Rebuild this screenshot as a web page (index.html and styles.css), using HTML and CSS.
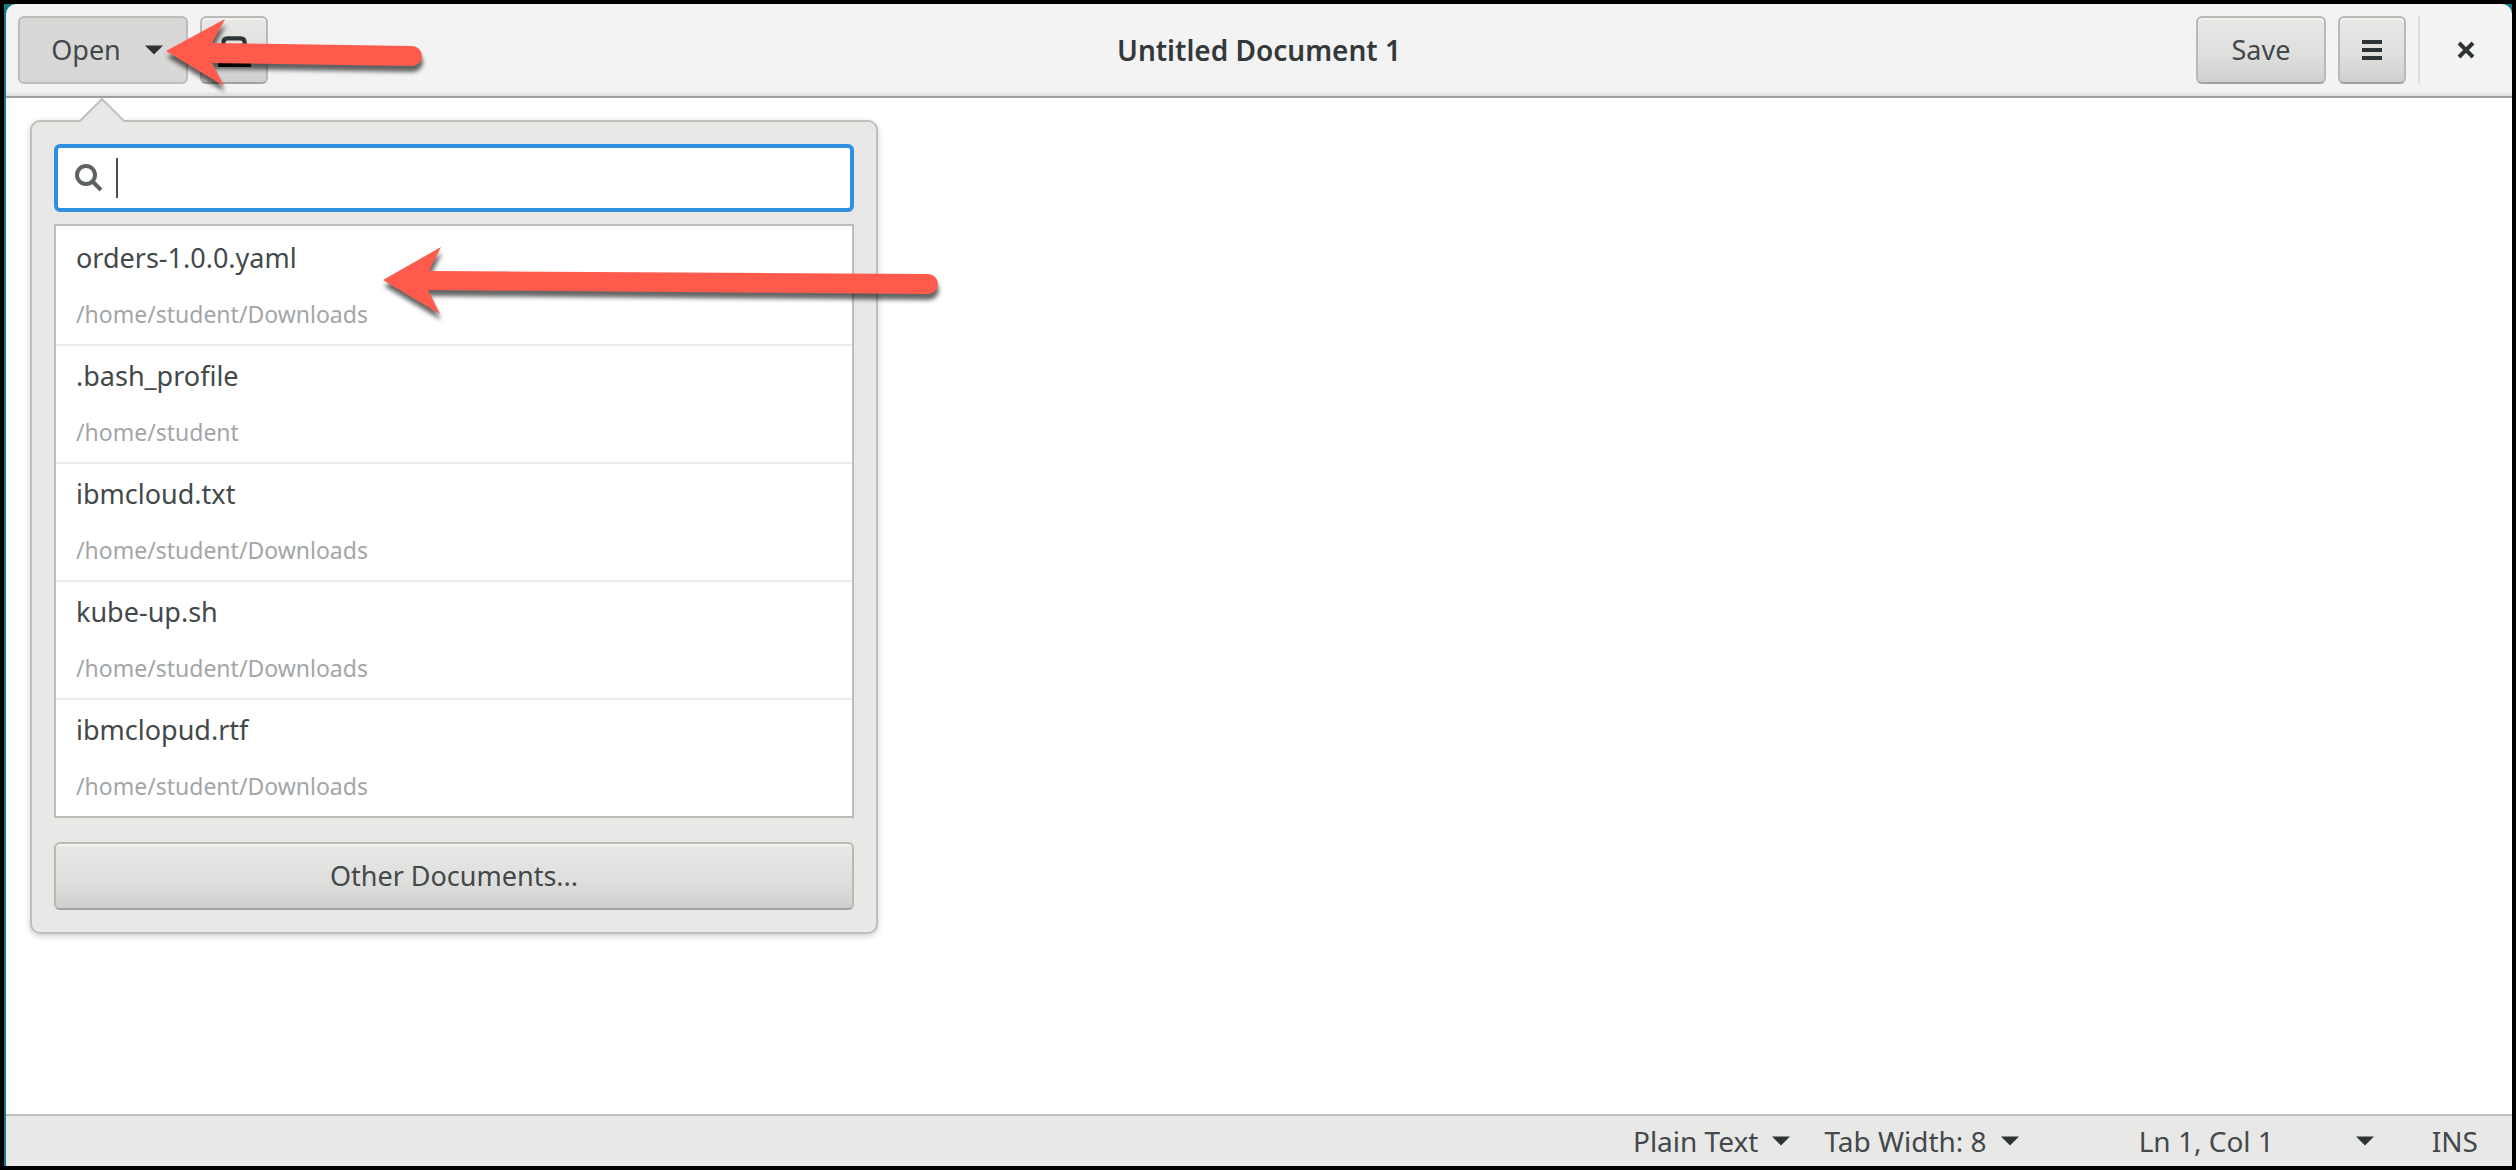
FILE: index.html
```html
<!DOCTYPE html>
<html lang="en">
<head>
  <meta charset="utf-8">
  <title>Untitled Document 1</title>
  <link rel="stylesheet" href="styles.css">
</head>
<body>
  <div class="window">
    <header class="headerbar">
      <div class="header-start">
        <div class="open-group">
          <button class="button button-open" type="button" aria-expanded="true">
            <span>Open</span>
            <svg class="caret" viewBox="0 0 20 10" aria-hidden="true"><path d="M0 0h20L10 10z"/></svg>
          </button>

          <section class="popover" aria-label="Open a document">
            <svg class="popover-tip" viewBox="0 0 44 24" aria-hidden="true"><path class="tip-fill" d="M0 24L22 1L44 24z"/><path class="tip-line" d="M0 23L22 1L44 23"/></svg>
            <label class="search">
              <svg class="search-icon" viewBox="0 0 30 30" aria-hidden="true"><circle cx="12" cy="12" r="9"/><path d="M18 18l9 9"/></svg>
              <span class="text-cursor"></span>
              <input class="search-input" type="text" aria-label="Search documents">
            </label>
            <ul class="documents">
              <li class="document"><span class="name">orders-1.0.0.yaml</span><span class="path">/home/student/Downloads</span></li>
              <li class="document"><span class="name">.bash_profile</span><span class="path">/home/student</span></li>
              <li class="document"><span class="name">ibmcloud.txt</span><span class="path">/home/student/Downloads</span></li>
              <li class="document"><span class="name">kube-up.sh</span><span class="path">/home/student/Downloads</span></li>
              <li class="document"><span class="name">ibmclopud.rtf</span><span class="path">/home/student/Downloads</span></li>
            </ul>
            <button class="button button-wide" type="button">Other Documents...</button>
          </section>
        </div>
        <button class="button button-icon" type="button" aria-label="New document">
          <svg class="icon-new" viewBox="0 0 32 32" aria-hidden="true"><path class="page" d="M6 30V9q0-4 4-4h12q4 0 4 4v21"/><path class="base" d="M1 27h32v5H1z"/></svg>
        </button>
      </div>
      <h1 class="title">Untitled Document 1</h1>
      <div class="header-end">
        <button class="button button-save" type="button">Save</button>
        <button class="button button-icon" type="button" aria-label="Menu">
          <svg class="icon-menu" viewBox="0 0 20 20" aria-hidden="true"><path d="M0 0h20v4H0zM0 8h20v4H0zM0 16h20v4H0z"/></svg>
        </button>
        <button class="button-close" type="button" aria-label="Close">
          <svg class="icon-close" viewBox="0 0 18 18" aria-hidden="true"><path d="M2 2l14 14M16 2L2 16"/></svg>
        </button>
      </div>
    </header>

    <main class="editor"></main>

    <footer class="statusbar">
      <button class="status-button" type="button">Plain Text <svg class="caret" viewBox="0 0 20 10" aria-hidden="true"><path d="M0 0h20L10 10z"/></svg></button>
      <button class="status-button" type="button">Tab Width: 8 <svg class="caret" viewBox="0 0 20 10" aria-hidden="true"><path d="M0 0h20L10 10z"/></svg></button>
      <button class="status-button position" type="button">Ln 1, Col 1 <svg class="caret" viewBox="0 0 20 10" aria-hidden="true"><path d="M0 0h20L10 10z"/></svg></button>
      <span class="mode">INS</span>
    </footer>
  </div>

  <svg class="pointer pointer-open" viewBox="0 0 270 90" aria-hidden="true"><path d="M6 41L65 9L52 33L252 36A10 10 0 0 1 252 56L52 53L64 76z"/></svg>
  <svg class="pointer pointer-file" viewBox="0 0 580 90" aria-hidden="true"><path d="M13 40L71 7L59 31L558 34A10 10 0 0 1 558 54L58 50L70 74z"/></svg>
</body>
</html>
```
FILE: styles.css
```css
* {
  box-sizing: border-box;
}

body {
  position: relative;
  min-height: 100vh;
  margin: 0;
  padding: 4px;
  display: flex;
  background: #000;
  color: #43494b;
  font-family: "Noto Sans", "Open Sans", sans-serif;
  font-size: 27px;
  line-height: 36px;
}

button,
input {
  margin: 0;
  padding: 0;
  border: 0;
  background: none;
  color: inherit;
  font: inherit;
}

svg {
  display: block;
  flex: none;
}

.window {
  flex: 1;
  display: flex;
  flex-direction: column;
  padding-left: 2px;
  background: #16798a;
}

/* Header bar */

.headerbar {
  display: grid;
  grid-template-columns: 1fr auto 1fr;
  align-items: center;
  padding: 12px;
  border-bottom: 2px solid #a0a09e;
  border-radius: 10px 10px 0 0;
  background: linear-gradient(#f3f3f3 94%, #dededc);
}

.header-start,
.header-end {
  display: flex;
  gap: 12px;
}

.header-end {
  justify-content: flex-end;
  margin-right: -12px;
}

.title {
  margin: 0;
  color: #33393b;
  font-size: 28px;
  font-weight: 600;
  line-height: 36px;
}

.button {
  display: flex;
  align-items: center;
  justify-content: center;
  height: 68px;
  border: 2px solid #b9b9b6;
  border-bottom-color: #a2a2a0;
  border-radius: 6px;
  background: linear-gradient(#e8e8e6, #dededc 60%, #cfcfcd);
  box-shadow: inset 0 2px #f3f3f2;
}

.button-open {
  gap: 24px;
  width: 170px;
  padding-left: 8px;
  border-color: #bcbcb9;
  background: #d8d8d6;
  box-shadow: none;
}

.button-icon {
  width: 68px;
}

.button-save {
  width: 130px;
}

.button-close {
  display: flex;
  align-items: center;
  justify-content: center;
  width: 94px;
  height: 68px;
  border-left: 2px solid #dededd;
}

.caret {
  width: 18px;
  height: 10px;
  fill: #2e3436;
}

.icon-new {
  width: 34px;
  height: 34px;
}

.icon-new .page {
  fill: none;
  stroke: #2e3436;
  stroke-width: 4;
}

.icon-new .base {
  fill: #111;
}

.icon-menu {
  width: 20px;
  height: 20px;
  fill: #2e3436;
}

.icon-close {
  width: 18px;
  height: 18px;
  stroke: #2e3436;
  stroke-width: 4;
}

/* Popover */

.open-group {
  position: relative;
}

.popover {
  position: absolute;
  z-index: 1;
  top: 104px;
  left: 12px;
  width: 848px;
  padding: 22px;
  border: 2px solid #bfbfbc;
  border-radius: 10px;
  background: #e8e8e6;
  box-shadow: 0 2px 6px rgba(0, 0, 0, 0.2);
}

.popover-tip {
  position: absolute;
  top: -24px;
  left: 48px;
  width: 44px;
  height: 24px;
}

.tip-fill {
  fill: #e8e8e6;
}

.tip-line {
  fill: none;
  stroke: #bfbfbc;
  stroke-width: 2;
}

.search {
  display: flex;
  align-items: center;
  gap: 12px;
  height: 68px;
  padding-left: 16px;
  border: 4px solid #2f8fe0;
  border-radius: 6px;
  background: #fff;
}

.search-icon {
  width: 30px;
  height: 30px;
  fill: none;
  stroke: #5c6163;
  stroke-width: 4;
}

.text-cursor {
  width: 2px;
  height: 40px;
  background: #4a4f51;
}

.search-input {
  flex: 1;
  height: 100%;
  outline: 0;
}

.documents {
  margin: 12px 0 24px;
  padding: 0;
  border: 2px solid #bcbcb8;
  background: #fff;
  list-style: none;
}

.document {
  display: flex;
  flex-direction: column;
  gap: 20px;
  height: 118px;
  padding: 14px 20px;
}

.document + .document {
  box-shadow: inset 0 2px #ebebea;
}

.name {
  line-height: 36px;
}

.path {
  color: #a3a6a7;
  font-size: 23px;
  line-height: 36px;
}

.button-wide {
  width: 100%;
}

/* Document area and status bar */

.editor {
  flex: 1;
  background: #fff;
}

.statusbar {
  display: flex;
  align-items: center;
  justify-content: flex-end;
  gap: 34px;
  height: 52px;
  padding-right: 34px;
  border-top: 2px solid #bfbfbc;
  background: #e8e8e6;
  font-size: 28px;
}

.status-button {
  display: flex;
  align-items: center;
  gap: 14px;
}

.position {
  gap: 82px;
  margin-left: 86px;
}

.mode {
  margin-left: 24px;
}

/* Red call-out arrows over the window */

.pointer {
  position: absolute;
  z-index: 2;
  height: 90px;
  fill: #ff5a4c;
  filter: drop-shadow(1px 6px 2px rgba(0, 0, 0, 0.6));
  pointer-events: none;
}

.pointer-open {
  top: 10px;
  left: 160px;
  width: 270px;
}

.pointer-file {
  top: 240px;
  left: 370px;
  width: 580px;
}
```
